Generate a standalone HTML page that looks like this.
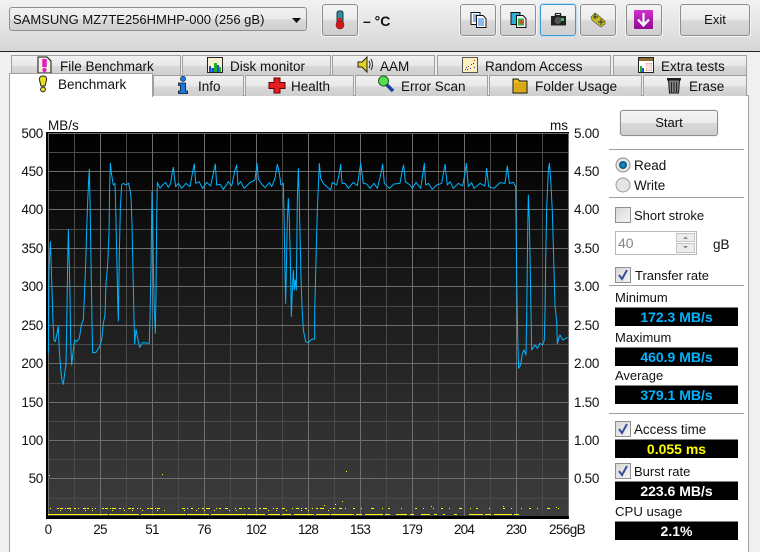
<!DOCTYPE html>
<html><head><meta charset="utf-8">
<style>
html,body{margin:0;padding:0}
body{width:760px;height:552px;overflow:hidden;background:#f0f0f0;position:relative;font-family:"Liberation Sans",sans-serif;font-size:13px;color:#111}
.a{position:absolute}
.t{position:absolute;white-space:nowrap;line-height:16px}
.tt{position:absolute;white-space:nowrap;line-height:16px;font-size:13.5px}
.btn{position:absolute;box-sizing:border-box;border:1px solid #8f8f8f;border-radius:3px;background:linear-gradient(#f4f4f4 0,#ececec 48%,#d9d9d9 52%,#cfcfcf 100%);box-shadow:0 0 0 1px #f4f4f4}
.tab{position:absolute;box-sizing:border-box;height:20px;border:1px solid #a0a0a0;border-bottom:0;background:linear-gradient(#f2f2f2,#e8e8e8 50%,#d8d8d8 55%,#cfcfcf)}
.sep{position:absolute;left:609px;width:135px;height:1px;background:#a0a0a0}
.box{position:absolute;left:615px;width:123px;height:19px;background:#000;border-top:1px solid #808080;box-sizing:border-box;text-align:center;font-weight:bold;font-size:14px;line-height:18px}
.cb{position:absolute;left:615px;width:16px;height:16px;box-sizing:border-box;border:1px solid #8e8f8f;background:linear-gradient(135deg,#d8d8d8,#f4f4f4)}
.lab{position:absolute;white-space:nowrap;line-height:16px;font-size:13px}
.yl{position:absolute;left:3px;width:40px;text-align:right;font-size:13.5px;letter-spacing:-.3px;line-height:16px}
.yr{position:absolute;left:574px;font-size:13.5px;letter-spacing:-.3px;line-height:16px}
.xl{position:absolute;top:522px;font-size:13.5px;letter-spacing:-.8px;line-height:16px;width:40px;text-align:center}
</style></head><body>
<!-- toolbar -->
<div class="a" style="left:0;top:0;width:760px;height:51px;background:linear-gradient(#f2f2f2,#d6d6d6)"></div>
<div class="a" style="left:0;top:51px;width:760px;height:1px;background:#222"></div>
<!-- combo -->
<div class="a" style="left:9px;top:7px;width:298px;height:24px;box-sizing:border-box;border:1px solid #8f8f8f;border-radius:3px;background:linear-gradient(#f2f2f2,#ebebeb 48%,#dadada 52%,#d0d0d0)"></div>
<div class="t" style="left:13px;top:12px;font-size:13px">SAMSUNG MZ7TE256HMHP-000 (256 gB)</div>
<svg class="a" style="left:292px;top:18px" width="10" height="6"><path d="M0 0H9L4.500 5Z" fill="#111"/></svg>
<!-- buttons -->
<div class="btn" style="left:322px;top:4px;width:36px;height:32px"></div>
<svg class="a" style="left:334px;top:10px" width="12" height="20"><rect x="3" y="1" width="6" height="13" rx="2" fill="#2f8fa0" stroke="#234"/><rect x="4" y="8" width="4" height="7" fill="#e02020"/><circle cx="6" cy="15" r="4" fill="#d81818" stroke="#711" stroke-width=".6"/></svg>
<div class="t" style="left:363px;top:13px;font-weight:bold;font-size:14px">– °C</div>
<div class="btn" style="left:460px;top:4px;width:36px;height:32px"></div>
<svg class="a" style="left:470px;top:12px" width="17" height="16"><rect x="1" y=".5" width="9" height="12" fill="#fff" stroke="#111"/><path d="M3 3h5M3 5h5M3 7h5M3 9h5" stroke="#1a6fe0"/><path d="M6.500 3.500H13L16 6.500V15.500H6.500Z" fill="#fff" stroke="#111"/><path d="M8 7h6M8 9h6M8 11h6M8 13h6" stroke="#1a6fe0"/></svg>
<div class="btn" style="left:500px;top:4px;width:36px;height:32px"></div>
<svg class="a" style="left:510px;top:12px" width="17" height="16"><rect x="1" y=".5" width="9" height="12" fill="#30b0d0" stroke="#111"/><path d="M6.500 3.500H13L16 6.500V15.500H6.500Z" fill="#f4f4f4" stroke="#111"/><rect x="8" y="6.500" width="6" height="7" fill="#30b040"/><rect x="10" y="8.500" width="3" height="3" fill="#e04020"/></svg>
<div class="btn" style="left:540px;top:4px;width:36px;height:32px;border-color:#3c9ad6;box-shadow:0 0 0 1px #bfe0f4"></div>
<svg class="a" style="left:550px;top:12px" width="17" height="14"><path d="M1 4H4.500L5 1H11L11.500 4H16V13.500H1Z" fill="#222"/><path d="M6 3V2H10V3Z" fill="#ddd"/><circle cx="8" cy="8.500" r="3.500" fill="#555"/><rect x="11" y="6" width="3" height="3" fill="#30c060"/></svg>
<div class="btn" style="left:580px;top:4px;width:36px;height:32px"></div>
<svg class="a" style="left:590px;top:12px" width="17" height="16"><path d="M1 5L5 1L9 4L15 9L15 12L11 15L7 12L2 8Z" fill="#c8bc20" stroke="#665" stroke-width=".8"/><path d="M5 1V7M11 7V13M3 5H8M8 10H14" stroke="#443" stroke-width="1.200"/></svg>
<div class="btn" style="left:626px;top:4px;width:36px;height:32px"></div>
<div class="a" style="left:634px;top:10px;width:19px;height:19px;background:linear-gradient(#d030d0,#900a90);border-radius:1px"></div>
<svg class="a" style="left:634px;top:10px" width="19" height="19"><path d="M9.500 3V15M4 9.500L9.500 15.500L15 9.500" stroke="#fff" stroke-width="2.200" fill="none"/></svg>
<div class="btn" style="left:680px;top:4px;width:70px;height:32px"></div>
<div class="t" style="left:680px;top:12px;width:70px;text-align:center;font-size:13px">Exit</div>
<!-- tabs top -->
<div class="tab" style="left:11px;top:55px;width:170px"></div>
<div class="tab" style="left:182px;top:55px;width:149px"></div>
<div class="tab" style="left:332px;top:55px;width:103px"></div>
<div class="tab" style="left:437px;top:55px;width:174px"></div>
<div class="tab" style="left:613px;top:55px;width:134px"></div>
<div class="tt" style="left:60px;top:59px">File Benchmark</div>
<div class="tt" style="left:230px;top:59px">Disk monitor</div>
<div class="tt" style="left:380px;top:59px">AAM</div>
<div class="tt" style="left:485px;top:59px">Random Access</div>
<div class="tt" style="left:661px;top:59px">Extra tests</div>
<svg class="a" style="left:37px;top:56px" width="15" height="18"><path d="M1 1H10L14 5V17H1Z" fill="#f4f0e0" stroke="#111"/><path d="M7.500 3v8" stroke="#e020c0" stroke-width="4.500"/><circle cx="7.500" cy="14" r="2.200" fill="#e020c0"/></svg>
<svg class="a" style="left:207px;top:57px" width="16" height="16"><rect x=".5" y=".5" width="15" height="15" fill="#f4f0d0" stroke="#222"/><path d="M2 15V9h2v6M5 15V11h2v4M10 15V8h2v7" fill="#1e50e0"/><path d="M4 15V11h1v4M7 15V6h3v9M12 15V10h2v5" fill="#20b020"/></svg>
<svg class="a" style="left:357px;top:56px" width="18" height="17"><path d="M1 6H5L10 1V16L5 11H1Z" fill="#e8d020" stroke="#222"/><path d="M12 5Q14 8.500 12 12M14 3Q17 8.500 14 14" stroke="#222" fill="none"/></svg>
<svg class="a" style="left:462px;top:57px" width="16" height="16"><rect x=".5" y=".5" width="15" height="15" fill="#fdf0c0" stroke="#555"/><path d="M3 12h1v1H3zM6 9h1v1H6zM9 7h1v1H9zM12 3h1v1h-1zM5 12h1v1H5z" fill="#d02020"/><path d="M4 10h1v1H4zM8 11h1v1H8zM11 6h1v1h-1zM12 10h1v1h-1z" fill="#2030c0"/></svg>
<svg class="a" style="left:638px;top:57px" width="16" height="16"><rect x=".5" y=".5" width="15" height="15" fill="#fff" stroke="#222"/><rect x="1" y="1" width="14" height="3" fill="#8a6a30"/><rect x="2" y="9" width="2" height="6" fill="#20b020"/><rect x="4" y="11" width="2" height="4" fill="#1e50e0"/><path d="M8 6h6v8H8z" fill="#e88"/><path d="M8 8h6M8 10h6M8 12h6M10 6v8M12 6v8" stroke="#fff"/></svg>
<!-- panel -->
<div class="a" style="left:9px;top:95px;width:740px;height:457px;box-sizing:border-box;background:#fff;border-left:1px solid #a0a0a0;border-right:1px solid #a0a0a0;border-top:1px solid #a0a0a0"></div>
<!-- tabs bottom -->
<div class="tab" style="left:153px;top:75px;width:91px;height:21px"></div>
<div class="tab" style="left:245px;top:75px;width:109px;height:21px"></div>
<div class="tab" style="left:355px;top:75px;width:133px;height:21px"></div>
<div class="tab" style="left:489px;top:75px;width:153px;height:21px"></div>
<div class="tab" style="left:643px;top:75px;width:104px;height:21px"></div>
<div class="a" style="left:9px;top:73px;width:144px;height:24px;box-sizing:border-box;background:#fff;border:1px solid #a0a0a0;border-bottom:0"></div>
<div class="tt" style="left:58px;top:77px">Benchmark</div>
<div class="tt" style="left:198px;top:79px">Info</div>
<div class="tt" style="left:291px;top:79px">Health</div>
<div class="tt" style="left:401px;top:79px">Error Scan</div>
<div class="tt" style="left:535px;top:79px;font-size:13.7px">Folder Usage</div>
<div class="tt" style="left:689px;top:79px">Erase</div>
<svg class="a" style="left:37px;top:75px" width="12" height="18"><path d="M6 1C9 1 10 3 9.500 5L8 11H4L2.500 5C2 3 3 1 6 1Z" fill="#e8e020" stroke="#222"/><circle cx="6" cy="14.500" r="2.400" fill="#e8e020" stroke="#222"/></svg>
<svg class="a" style="left:177px;top:76px" width="12" height="18"><circle cx="6" cy="2.800" r="2.600" fill="#1e78e0" stroke="#123" stroke-width=".6"/><path d="M1.500 7H8.500V15H10.500V17.500H1.500V15H3.500V9.500H1.500Z" fill="#1e78e0" stroke="#012" stroke-width=".8"/></svg>
<svg class="a" style="left:268px;top:77px" width="18" height="17"><path d="M6 1H12V5.500H17V11.500H12V16H6V11.500H1V5.500H6Z" fill="#e02020" stroke="#600"/></svg>
<svg class="a" style="left:378px;top:75px" width="17" height="18"><path d="M8 9L15 16" stroke="#1a40a0" stroke-width="3.500"/><circle cx="5.500" cy="6" r="5" fill="#50e050" stroke="#252"/></svg>
<svg class="a" style="left:512px;top:76px" width="17" height="18"><path d="M1 3H6L7.500 5H15V17H1Z" fill="#e8c020" stroke="#111"/><rect x="2.500" y="7" width="11.500" height="9" fill="#d8a818"/></svg>
<svg class="a" style="left:666px;top:76px" width="16" height="18"><rect x="1" y="2" width="14" height="2.500" fill="#222"/><path d="M2.500 4H13.500L12.500 17H3.500Z" fill="#888" stroke="#111"/><path d="M5.500 6V16M8 6V16M10.500 6V16" stroke="#222"/></svg>
<!-- chart -->
<svg class="a" style="left:0;top:0" width="610" height="552" font-family="Liberation Sans, sans-serif">
<defs><linearGradient id="g" x1="0" y1="0" x2="0" y2="1"><stop offset="0" stop-color="#000"/><stop offset="1" stop-color="#3d3d3d"/></linearGradient></defs>
<rect x="46" y="132" width="523" height="387" fill="#000"/>
<rect x="48" y="134" width="521" height="382" fill="url(#g)"/>
<g stroke="#4a4a4a" fill="none" shape-rendering="crispEdges">
<path d="M74.500 134V516M126.500 134V516M178.500 134V516M230.500 134V516M282.500 134V516M334.500 134V516M386.500 134V516M438.500 134V516M490.500 134V516M542.500 134V516"/>
<path d="M48 152.500H569M48 190.500H569M48 229.500H569M48 267.500H569M48 306.500H569M48 344.500H569M48 383.500H569M48 421.500H569M48 459.500H569M48 498.500H569"/>
</g>
<g stroke="#6e6e6e" fill="none" shape-rendering="crispEdges">
<path d="M48.500 134V516M100.500 134V516M152.500 134V516M204.500 134V516M256.500 134V516M308.500 134V516M360.500 134V516M412.500 134V516M464.500 134V516M516.500 134V516M568.500 134V516"/>
<path d="M48 133.500H569M48 171.500H569M48 209.500H569M48 248.500H569M48 286.500H569M48 325.500H569M48 363.500H569M48 402.500H569M48 440.500H569M48 478.500H569"/>
</g>
<path transform="translate(0,120) scale(.33333)" fill="none" stroke="#00b4ff" stroke-width="3" stroke-linejoin="round" d="M145 700 147 450 151 365 153 415 156 510 159 605 162 660 166 665 170 645 175 618 178 695 182 745 185 775 190 793 194 760 198 735 200 628 203 430 205 328 207 400 210 530 212 665 215 735 220 690 224 660 230 665 238 655 244 615 250 600 253 535 257 430 260 330 263 245 266 180 268 148 270 240 273 425 276 605 278 698 287 698 298 682 305 660 310 610 315 585 318 490 323 435 327 340 329 200 331 130 335 165 340 195 345 190 347 260 350 395 353 535 355 603 358 400 361 265 365 195 370 190 377 195 386 190 390 210 393 230 396 310 399 455 402 600 404 672 408 628 413 655 419 682 428 668 448 670 450 595 453 445 456 215 458 290 460 430 463 570 466 640 468 525 470 300 472 187 480 205 488 195 497 187 505 202 512 190 517 155 520 142 523 170 527 200 535 190 545 205 558 190 570 200 578 155 583 132 587 190 597 185 608 205 620 187 632 198 642 150 646 132 650 195 660 193 670 208 685 185 695 198 705 150 710 135 714 195 722 185 732 205 750 188 765 180 771 130 775 178 785 192 795 203 808 188 815 200 825 175 832 133 838 160 843 195 850 190 852 280 855 460 857 550 860 400 862 300 865 235 868 300 871 415 874 590 877 510 880 450 883 510 886 480 889 510 892 240 895 145 897 210 900 340 903 470 906 560 910 630 917 665 925 668 935 658 944 657 944 580 948 420 952 270 958 130"/>
<path transform="translate(270,120) scale(.33333)" fill="none" stroke="#00b4ff" stroke-width="3" stroke-linejoin="round" d="M148 130 152 175 160 190 170 200 182 210 187 187 200 195 207 165 212 133 216 190 225 190 235 205 250 187 262 197 272 130 280 190 290 192 300 205 312 190 322 205 333 160 338 132 343 190 358 205 372 192 390 190 397 150 401 135 406 185 420 195 427 205 438 187 452 205 458 165 463 130 467 195 475 190 487 208 500 195 515 190 525 133 532 195 540 185 550 205 565 190 578 198 585 160 589 130 595 200 605 188 612 205 630 190 645 198 650 145 656 200 672 205 690 188 705 190 712 138 718 190 730 187 737 200 738 290 740 470 743 650 746 745 752 735 757 700 762 690 768 705 770 590 773 345 775 225 778 300 781 460 785 690 795 675 802 685 810 670 818 675 823 660 825 580 827 425 830 265 835 150 838 130 842 175 847 275 852 450 855 555 860 605 862 672 866 655 870 645 878 660 893 652"/>
<!-- yellow -->
<g stroke="#ffff00" fill="none" shape-rendering="crispEdges">
<path d="M48 514.500H340" stroke-dasharray="60 1 30 2 45 1 22 2 35 1 18 3 12 2 9 3 20 2 14 1"/>
<path d="M340 514.500H520" stroke-dasharray="14 2 6 3 18 2 5 6 11 3 4 7 9 4 3 6 2 9 3 12"/>
<path d="M50 508.500H160" stroke-dasharray="1 6 2 1 3 2 1 1 4 3 2 2 1 4 3 1 2 3 1 2"/>
<path d="M182 508.500H345" stroke-dasharray="3 2 1 3 2 5 1 3 2 2 4 6 1 2 2 4 3 7 1 3"/>
<path d="M345 508.500H560" stroke-dasharray="1 7 2 6 1 9 3 8 1 5 2 11 1 13 2 6 1 9"/>
<path d="M60 510.500H340" stroke-dasharray="1 9 1 14 1 6 1 19 1 11 1 7"/>
</g>
<g fill="#ffff00"><rect x="49" y="475" width="1" height="1"/><rect x="162" y="474" width="1" height="1"/><rect x="346" y="471" width="1" height="1"/><rect x="342" y="501" width="1" height="1"/><rect x="335" y="504" width="1" height="1"/><rect x="324" y="505" width="1" height="1"/><rect x="431" y="506" width="1" height="1"/><rect x="503" y="506" width="1" height="1"/><rect x="556" y="507" width="1" height="1"/></g>
</svg>
<div class="t" style="left:48px;top:118px;font-size:13.5px">MB/s</div>
<div class="t" style="left:550px;top:118px;font-size:13.5px">ms</div>
<div class="yl" style="top:126px">500</div><div class="yl" style="top:164px">450</div><div class="yl" style="top:202px">400</div><div class="yl" style="top:241px">350</div><div class="yl" style="top:279px">300</div><div class="yl" style="top:318px">250</div><div class="yl" style="top:356px">200</div><div class="yl" style="top:395px">150</div><div class="yl" style="top:433px">100</div><div class="yl" style="top:471px">50</div>
<div class="yr" style="top:126px">5.00</div><div class="yr" style="top:164px">4.50</div><div class="yr" style="top:202px">4.00</div><div class="yr" style="top:241px">3.50</div><div class="yr" style="top:279px">3.00</div><div class="yr" style="top:318px">2.50</div><div class="yr" style="top:356px">2.00</div><div class="yr" style="top:395px">1.50</div><div class="yr" style="top:433px">1.00</div><div class="yr" style="top:471px">0.50</div>
<div class="xl" style="left:28px">0</div><div class="xl" style="left:80px">25</div><div class="xl" style="left:132px">51</div><div class="xl" style="left:184px">76</div><div class="xl" style="left:236px">102</div><div class="xl" style="left:288px">128</div><div class="xl" style="left:340px">153</div><div class="xl" style="left:392px">179</div><div class="xl" style="left:444px">204</div><div class="xl" style="left:496px">230</div><div class="t" style="left:549px;top:522px;font-size:13.5px;letter-spacing:-.6px">256gB</div>
<!-- right panel -->
<div class="btn" style="left:620px;top:110px;width:98px;height:26px"></div>
<div class="t" style="left:620px;top:115px;width:98px;text-align:center">Start</div>
<div class="sep" style="top:149px"></div><div class="sep" style="top:197px"></div><div class="sep" style="top:285px"></div><div class="sep" style="top:413px"></div>
<svg class="a" style="left:615px;top:156px" width="17" height="38"><defs><radialGradient id="r"><stop offset="0" stop-color="#1a9ad8"/><stop offset="1" stop-color="#064f80"/></radialGradient></defs><circle cx="8" cy="9" r="7" fill="#e8e8e8" stroke="#8a8a8a"/><circle cx="8" cy="9" r="4" fill="url(#r)"/><circle cx="8" cy="29" r="7" fill="#e4e4e4" stroke="#9a9a9a"/></svg>
<div class="lab" style="left:634px;top:158px;font-size:13.5px">Read</div>
<div class="lab" style="left:634px;top:178px;font-size:13.5px">Write</div>
<div class="cb" style="top:207px"></div>
<div class="lab" style="left:634px;top:208px;font-size:13px">Short stroke</div>
<div class="a" style="left:615px;top:231px;width:82px;height:24px;box-sizing:border-box;border:1px solid #b8b8b8;background:#fff"></div>
<div class="t" style="left:618px;top:235px;color:#888;font-size:14px">40</div>
<div class="a" style="left:676px;top:233px;width:19px;height:9px;border:1px solid #c4c4c4;box-sizing:border-box;background:#ececec"></div>
<div class="a" style="left:676px;top:243px;width:19px;height:10px;border:1px solid #c4c4c4;box-sizing:border-box;background:#ececec"></div>
<svg class="a" style="left:676px;top:233px" width="19" height="20"><path d="M7 6H12L9.500 3.500ZM7 13H12L9.500 15.500Z" fill="#888"/></svg>
<div class="t" style="left:713px;top:237px;font-size:13.5px">gB</div>
<div class="cb" style="top:267px"></div>
<svg class="a" style="left:615px;top:267px" width="16" height="16"><path d="M4 8L7 12L12 3" stroke="#3a4f98" stroke-width="2" fill="none"/></svg>
<div class="lab" style="left:635px;top:268px;font-size:13px">Transfer rate</div>
<div class="lab" style="left:615px;top:290px">Minimum</div>
<div class="box" style="top:307px;color:#00b4ff">172.3 MB/s</div>
<div class="lab" style="left:615px;top:330px">Maximum</div>
<div class="box" style="top:347px;color:#00b4ff">460.9 MB/s</div>
<div class="lab" style="left:615px;top:368px">Average</div>
<div class="box" style="top:385px;color:#00b4ff">379.1 MB/s</div>
<div class="cb" style="top:421px"></div>
<svg class="a" style="left:615px;top:421px" width="16" height="16"><path d="M4 8L7 12L12 3" stroke="#3a4f98" stroke-width="2" fill="none"/></svg>
<div class="lab" style="left:634px;top:422px;font-size:13.4px">Access time</div>
<div class="box" style="top:439px;color:#ffff00">0.055 ms</div>
<div class="cb" style="top:463px"></div>
<svg class="a" style="left:615px;top:463px" width="16" height="16"><path d="M4 8L7 12L12 3" stroke="#3a4f98" stroke-width="2" fill="none"/></svg>
<div class="lab" style="left:634px;top:464px;font-size:13px">Burst rate</div>
<div class="box" style="top:481px;color:#fff">223.6 MB/s</div>
<div class="lab" style="left:615px;top:504px;font-size:13.2px">CPU usage</div>
<div class="box" style="top:521px;color:#fff">2.1%</div>
</body></html>
